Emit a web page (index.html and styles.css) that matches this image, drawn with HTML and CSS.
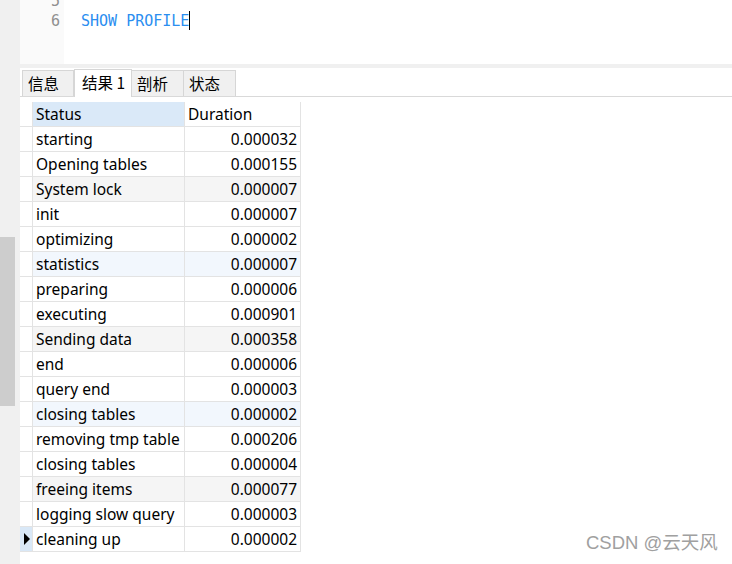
FILE: index.html
```html
<!DOCTYPE html>
<html>
<head>
<meta charset="utf-8">
<link rel="stylesheet" href="styles.css">
</head>
<body>
<div class="side"><div class="thumb"></div></div>
<div class="main">
  <div class="editor">
    <div class="gutter"><div class="ln">5</div><div class="ln">6</div></div>
    <div class="code"><div class="cl">&nbsp;</div><div class="cl"><span class="kw">SHOW PROFILE</span><span class="caret"></span></div></div>
  </div>
  <div class="sep"></div>
  <div class="tabs">
    <div class="tab">信息</div>
    <div class="tab active">结果 1</div>
    <div class="tab">剖析</div>
    <div class="tab">状态</div>
  </div>
  <div class="grid">
    <div class="rh"></div><div class="c hd sel">Status</div><div class="c hd">Duration</div>
    <div class="rh"></div><div class="c">starting</div><div class="c num">0.000032</div>
    <div class="rh"></div><div class="c">Opening tables</div><div class="c num">0.000155</div>
    <div class="rh"></div><div class="c g">System lock</div><div class="c num g">0.000007</div>
    <div class="rh"></div><div class="c">init</div><div class="c num">0.000007</div>
    <div class="rh"></div><div class="c">optimizing</div><div class="c num">0.000002</div>
    <div class="rh"></div><div class="c b">statistics</div><div class="c num b">0.000007</div>
    <div class="rh"></div><div class="c">preparing</div><div class="c num">0.000006</div>
    <div class="rh"></div><div class="c">executing</div><div class="c num">0.000901</div>
    <div class="rh"></div><div class="c g">Sending data</div><div class="c num g">0.000358</div>
    <div class="rh"></div><div class="c">end</div><div class="c num">0.000006</div>
    <div class="rh"></div><div class="c">query end</div><div class="c num">0.000003</div>
    <div class="rh"></div><div class="c b">closing tables</div><div class="c num b">0.000002</div>
    <div class="rh"></div><div class="c">removing tmp table</div><div class="c num">0.000206</div>
    <div class="rh"></div><div class="c">closing tables</div><div class="c num">0.000004</div>
    <div class="rh"></div><div class="c g">freeing items</div><div class="c num g">0.000077</div>
    <div class="rh"></div><div class="c">logging slow query</div><div class="c num">0.000003</div>
    <div class="rh cur"><svg width="7" height="12" viewBox="0 0 7 12"><polygon points="1,0 7,6 1,12" fill="#000"/></svg></div><div class="c">cleaning up</div><div class="c num">0.000002</div>
  </div>
</div>
<div class="mark">CSDN @云天风</div>
</body>
</html>
```
FILE: styles.css
```css
html, body {
  margin: 0;
  padding: 0;
}
body {
  width: 732px;
  height: 564px;
  overflow: hidden;
  display: flex;
  background: #fff;
  position: relative;
  font-family: "Noto Sans", "Noto Sans CJK SC", sans-serif;
}
.side {
  width: 20px;
  flex: none;
  background: #f0f0f0;
  padding-top: 237px;
  box-sizing: border-box;
}
.thumb {
  width: 15px;
  height: 169px;
  background: #cdcdcd;
}
.main {
  flex: 1;
  display: flex;
  flex-direction: column;
}
.editor {
  height: 64px;
  display: flex;
  overflow: hidden;
  font-family: "DejaVu Sans Mono", monospace;
  font-size: 15px;
  line-height: 20px;
}
.gutter {
  width: 44px;
  background: #fafafa;
  text-align: right;
  padding-right: 4px;
  box-sizing: border-box;
  color: #8f8f8f;
  margin-top: -9px;
}
.code {
  flex: 1;
  padding-left: 17px;
  margin-top: -9px;
  background: #fff;
}
.kw {
  color: #2b8ef0;
}
.caret {
  display: inline-block;
  width: 1px;
  height: 19px;
  background: #000;
  vertical-align: -4px;
}
.sep {
  height: 4px;
  background: #f0f0f0;
}
.tabs {
  height: 28px;
  display: flex;
  align-items: flex-end;
  border-bottom: 1px solid #d9d9d9;
  padding-left: 2px;
  font-family: "Noto Sans CJK SC", sans-serif;
  font-size: 15.5px;
  color: #000;
}
.tab {
  height: 26px;
  width: 52px;
  box-sizing: border-box;
  border: 1px solid #d6d6d6;
  border-bottom: none;
  background: #f0f0f0;
  padding-left: 5px;
  line-height: 25px;
}
.tab + .tab {
  border-left: none;
}
.tab.active {
  height: 28px;
  width: 58px;
  background: #fff;
  padding-left: 7px;
  line-height: 25px;
  margin-bottom: -1px;
  border-left: 1px solid #d6d6d6;
  border-right: 1px solid #d6d6d6;
  position: relative;
}
.tab.active + .tab {
  border-left: none;
}
.grid {
  margin-top: 5px;
  display: grid;
  grid-template-columns: 13px 152px 116px;
  grid-auto-rows: 25px;
  font-size: 15.5px;
  color: #000;
}
.rh {
  border-right: 1px solid #e3e3e3;
  border-bottom: 1px solid #e3e3e3;
  display: flex;
  align-items: center;
  padding-left: 3px;
}
.rh.cur {
  background: #d9e8f7;
}
.c {
  border-right: 1px solid #e3e3e3;
  border-bottom: 1px solid #e3e3e3;
  padding: 0 3px;
  line-height: 24px;
  white-space: nowrap;
  overflow: hidden;
}
.hd.sel {
  background: #dae9f8;
}
.num {
  text-align: right;
}
.g {
  background: #f5f5f5;
}
.b {
  background: #f2f7fd;
}
.mark {
  position: absolute;
  left: 586px;
  top: 531px;
  font-family: "Liberation Sans", "Noto Sans CJK SC", sans-serif;
  font-size: 18.5px;
  color: #a0a0a0;
  line-height: 24px;
}
```
